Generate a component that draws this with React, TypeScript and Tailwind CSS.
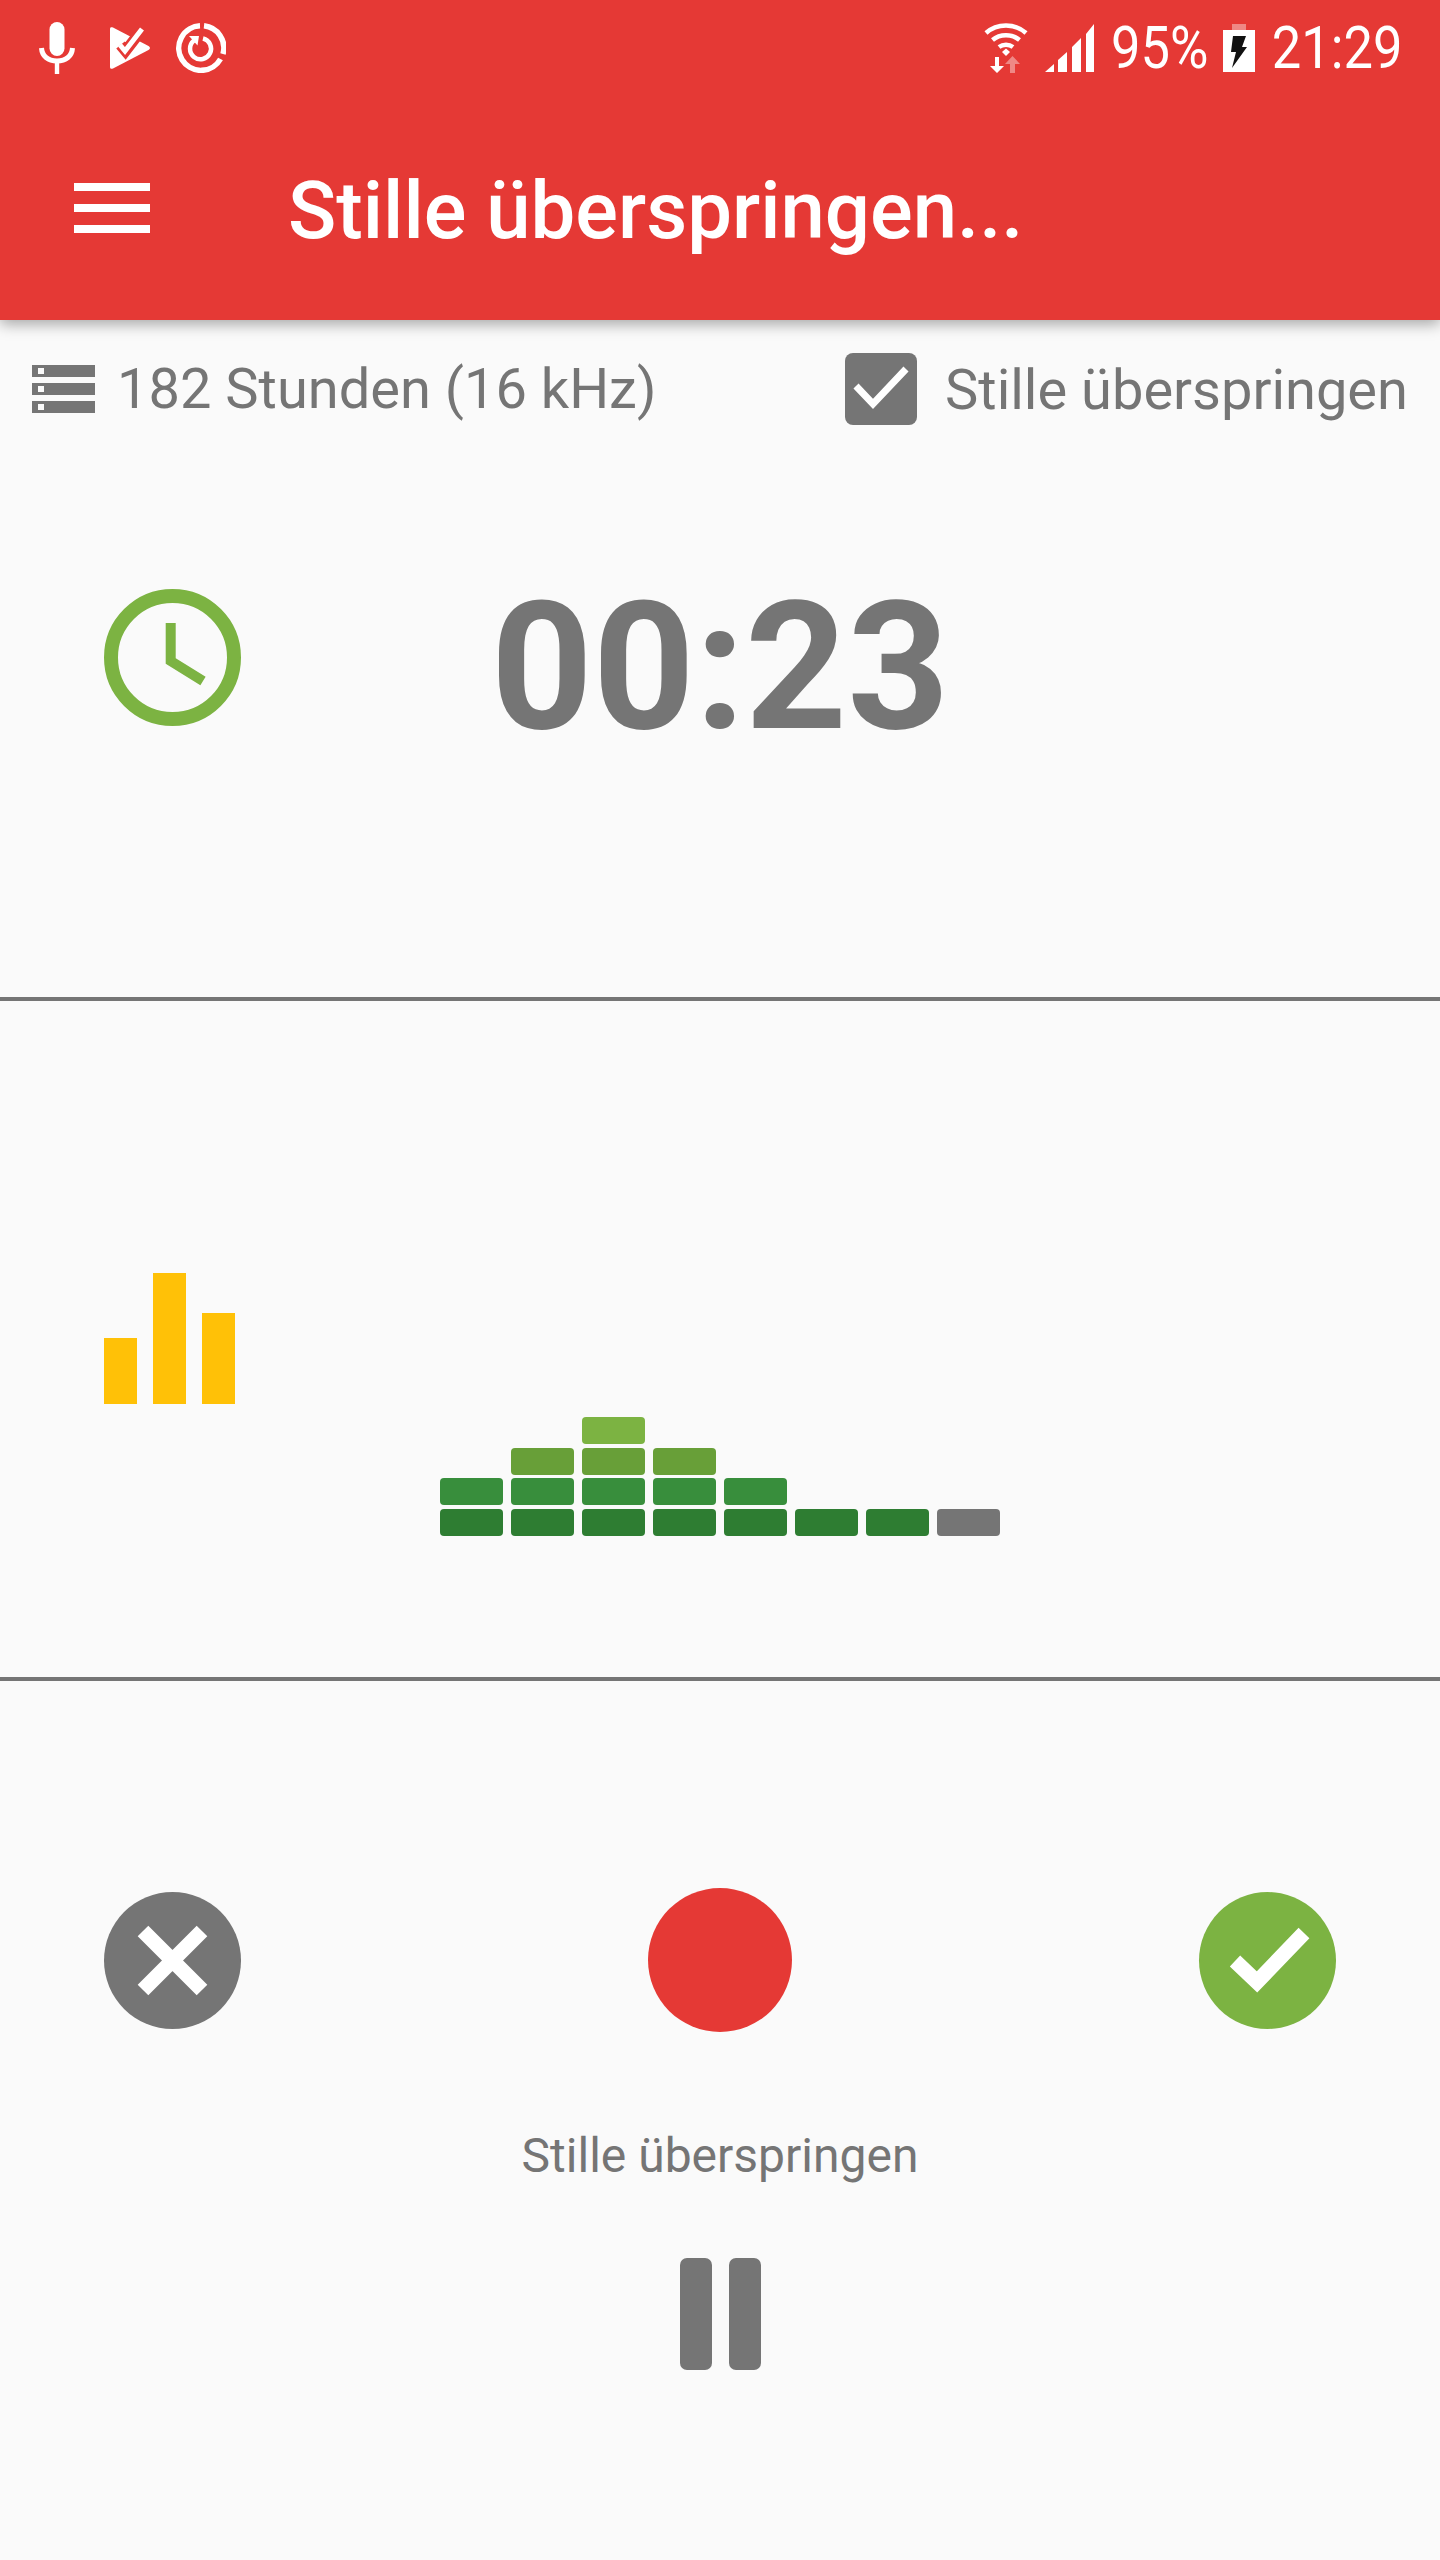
import React from "react";

const Mic = () => (
  <svg width="36" height="52" viewBox="0 0 36 52" className="block">
    <rect x="10.5" y="0" width="15" height="34" rx="7.5" fill="#fff" />
    <path d="M2.5 26 C3 34 9 39 18 39 C27 39 33 34 33.5 26" fill="none" stroke="#fff" strokeWidth="5" />
    <rect x="15.8" y="38" width="4.4" height="14" fill="#fff" />
  </svg>
);

const PlayCheck = () => (
  <svg width="40" height="42" viewBox="0 0 40 42" className="block">
    <path d="M0 2 C0 0.3 1.2 -0.3 3 0.6 L38.5 19 C40.4 20 40.4 22 38.5 23 L3 41.4 C1.2 42.3 0 41.7 0 40 Z" fill="#fff" />
    <path d="M10.5 18 L15.5 24 L32.5 2" fill="none" stroke="#e53935" strokeWidth="11" />
    <path d="M10 18 L15 24 L32 2" fill="none" stroke="#fff" strokeWidth="5" />
  </svg>
);

const Timer = () => (
  <svg width="50" height="50" viewBox="0 0 50 50" className="block">
    <path d="M24 2.8 A22.3 22.3 0 1 0 44.5 36" fill="none" stroke="#fff" strokeWidth="5.5" />
    <path d="M28 2.8 A22.3 22.3 0 0 1 47 31" fill="none" stroke="#fff" strokeWidth="5.5" />
    <path d="M18 17.5 A10.5 10.5 0 1 0 27 15.5" fill="none" stroke="#fff" strokeWidth="4.5" />
    <path d="M13 13 L23 13 L21.5 22.5 Z" fill="#fff" />
  </svg>
);

const Wifi = () => (
  <svg width="44" height="50" viewBox="0 0 44 50" className="block">
    <path d="M2 10 C13 0 31 0 42 10" fill="none" stroke="#fff" strokeWidth="4.5" />
    <path d="M8.5 17 C16 10.5 28 10.5 35.5 17" fill="none" stroke="#fff" strokeWidth="4.5" />
    <path d="M15 24 C19 21 25 21 29 24" fill="none" stroke="#fff" strokeWidth="4.5" />
    <path d="M18 29 L22 25.5 L26 29 L22 33 Z" fill="#fff" />
    <path d="M11 34 H15 V43 H20 L13 50 L6 43 H11 Z" fill="#fff" />
    <path d="M26 50 H31 V41 H36 L28.5 33 L21 41 H26 Z" fill="#fff" fillOpacity="0.4" />
  </svg>
);

const Signal = () => (
  <svg width="50" height="48" viewBox="0 0 50 48" className="block">
    <path d="M0 48 L9 40 V48 Z M13 48 V36 L22 28 V48 Z M27 48 V23 L36 14 V48 Z M41 48 V10 L49 0 V48 Z" fill="#fff" />
  </svg>
);

const Battery = () => (
  <svg width="32" height="48" viewBox="0 0 32 48" className="block">
    <rect x="9" y="0" width="14" height="6" fill="#fff" fillOpacity="0.4" />
    <rect x="0" y="6" width="32" height="42" fill="#fff" />
    <rect x="0" y="6" width="32" height="5" fill="#fff" fillOpacity="0.4" />
    <path d="M10 12 H23 L19 23 H24 L9 44 L13 28 H8 Z" fill="#111" />
  </svg>
);

const Menu = () => (
  <div className="flex w-[76px] flex-col gap-[13px]">
    <div className="h-[8px] bg-white" />
    <div className="h-[8px] bg-white" />
    <div className="h-[8px] bg-white" />
  </div>
);

const StorageRow = () => (
  <div className="relative h-[12px] w-[63px] bg-[#757575]">
    <div className="absolute left-[6px] top-[3px] h-[6px] w-[6px] bg-[#fafafa]" />
  </div>
);

const Clock = () => (
  <svg width="137" height="137" viewBox="0 0 137 137" className="block">
    <circle cx="68.5" cy="68.5" r="61.5" fill="none" stroke="#7cb342" strokeWidth="14" />
    <path d="M66.7 34 V72 L99 92" fill="none" stroke="#7cb342" strokeWidth="10" />
  </svg>
);

const rows: string[][] = [
  ["", "", "#7cb342", "", "", "", "", ""],
  ["", "#689f38", "#689f38", "#689f38", "", "", "", ""],
  ["#388e3c", "#388e3c", "#388e3c", "#388e3c", "#388e3c", "", "", ""],
  ["#2e7d32", "#2e7d32", "#2e7d32", "#2e7d32", "#2e7d32", "#2e7d32", "#2e7d32", "#757575"],
];

export default function App() {
  return (
    <div className="flex h-[2560px] w-[1440px] flex-col overflow-hidden bg-[#fafafa] font-['Roboto',sans-serif] text-[#757575]">
      <header className="relative z-10 h-[320px] shrink-0 bg-[#e53935] shadow-[0_4px_14px_rgba(0,0,0,0.35)]">
        <div className="flex h-[96px] items-center justify-between pl-[39px] pr-[38px]">
          <div className="flex items-center">
            <Mic />
            <div className="ml-[35px]"><PlayCheck /></div>
            <div className="ml-[26px]"><Timer /></div>
          </div>
          <div className="flex items-center">
            <Wifi />
            <div className="ml-[17px]"><Signal /></div>
            <span className="ml-[2px] origin-right scale-x-[0.875] text-[60px] font-normal leading-none text-white">95%</span>
            <div className="ml-[14px]"><Battery /></div>
            <span className="ml-[-2px] origin-right scale-x-[0.875] text-[60px] font-normal leading-none text-white">21:29</span>
          </div>
        </div>
        <div className="flex h-[224px] items-center pl-[74px]">
          <Menu />
          <h1 className="ml-[138px] pt-[6px] text-[79.7px] font-medium leading-none text-white">Stille überspringen...</h1>
        </div>
      </header>

      <div className="flex h-[138px] shrink-0 items-center justify-between pl-[32px] pr-[32px]">
        <div className="flex items-center gap-[22px]">
          <div className="flex flex-col gap-[6px]">
            <StorageRow />
            <StorageRow />
            <StorageRow />
          </div>
          <span className="text-[56px] font-normal leading-none">182 Stunden (16 kHz)</span>
        </div>
        <div className="flex items-center gap-[28px]">
          <div className="flex h-[72px] w-[72px] items-center justify-center rounded-[8px] bg-[#757575]">
            <svg width="72" height="72" viewBox="0 0 72 72" className="block">
              <path d="M11 33 L28 51 L61 16" fill="none" stroke="#fff" strokeWidth="7" />
            </svg>
          </div>
          <span className="pt-[2px] text-[56px] font-normal leading-none">Stille überspringen</span>
        </div>
      </div>

      <section className="grid h-[543px] shrink-0 grid-cols-[241px_1fr_241px] items-start border-b-[4px] border-[#757575] pt-[131px]">
        <div className="pl-[104px]"><Clock /></div>
        <div className="-mt-[11px] text-center text-[178px] font-bold leading-none">00:23</div>
      </section>

      <section className="flex h-[680px] shrink-0 items-start border-b-[4px] border-[#757575]">
        <div className="ml-[104px] mt-[272px] flex h-[131px] items-end gap-[16px]">
          <div className="h-[66px] w-[33px] bg-[#ffc107]" />
          <div className="h-[131px] w-[33px] bg-[#ffc107]" />
          <div className="h-[91px] w-[33px] bg-[#ffc107]" />
        </div>
        <div className="ml-[205px] mt-[416px] grid grid-cols-[repeat(8,63px)] grid-rows-[repeat(4,27px)] gap-x-[8px] gap-y-[3.5px]">
          {rows.flat().map((c, i) =>
            c ? (
              <div key={i} className="rounded-[4px]" style={{ backgroundColor: c }} />
            ) : (
              <div key={i} />
            )
          )}
        </div>
      </section>

      <section className="flex flex-1 flex-col items-center pt-[207px]">
        <div className="flex w-full items-center justify-between pl-[104px] pr-[104px]">
          <div className="h-[137px] w-[137px] rounded-full bg-[#757575]">
            <svg width="137" height="137" viewBox="0 0 137 137" className="block">
              <path d="M39 39 L98 98 M98 39 L39 98" fill="none" stroke="#fff" strokeWidth="15" />
            </svg>
          </div>
          <div className="h-[144px] w-[144px] rounded-full bg-[#e53935]" />
          <div className="h-[137px] w-[137px] rounded-full bg-[#7cb342]">
            <svg width="137" height="137" viewBox="0 0 137 137" className="block">
              <path d="M36 69 L58 90 L105 41" fill="none" stroke="#fff" strokeWidth="15" />
            </svg>
          </div>
        </div>
        <div className="mt-[100px] text-[48px] font-normal leading-none">Stille überspringen</div>
        <div className="mt-[78px] flex gap-[17px]">
          <div className="h-[112px] w-[32px] rounded-[7px] bg-[#757575]" />
          <div className="h-[112px] w-[32px] rounded-[7px] bg-[#757575]" />
        </div>
      </section>
    </div>
  );
}
